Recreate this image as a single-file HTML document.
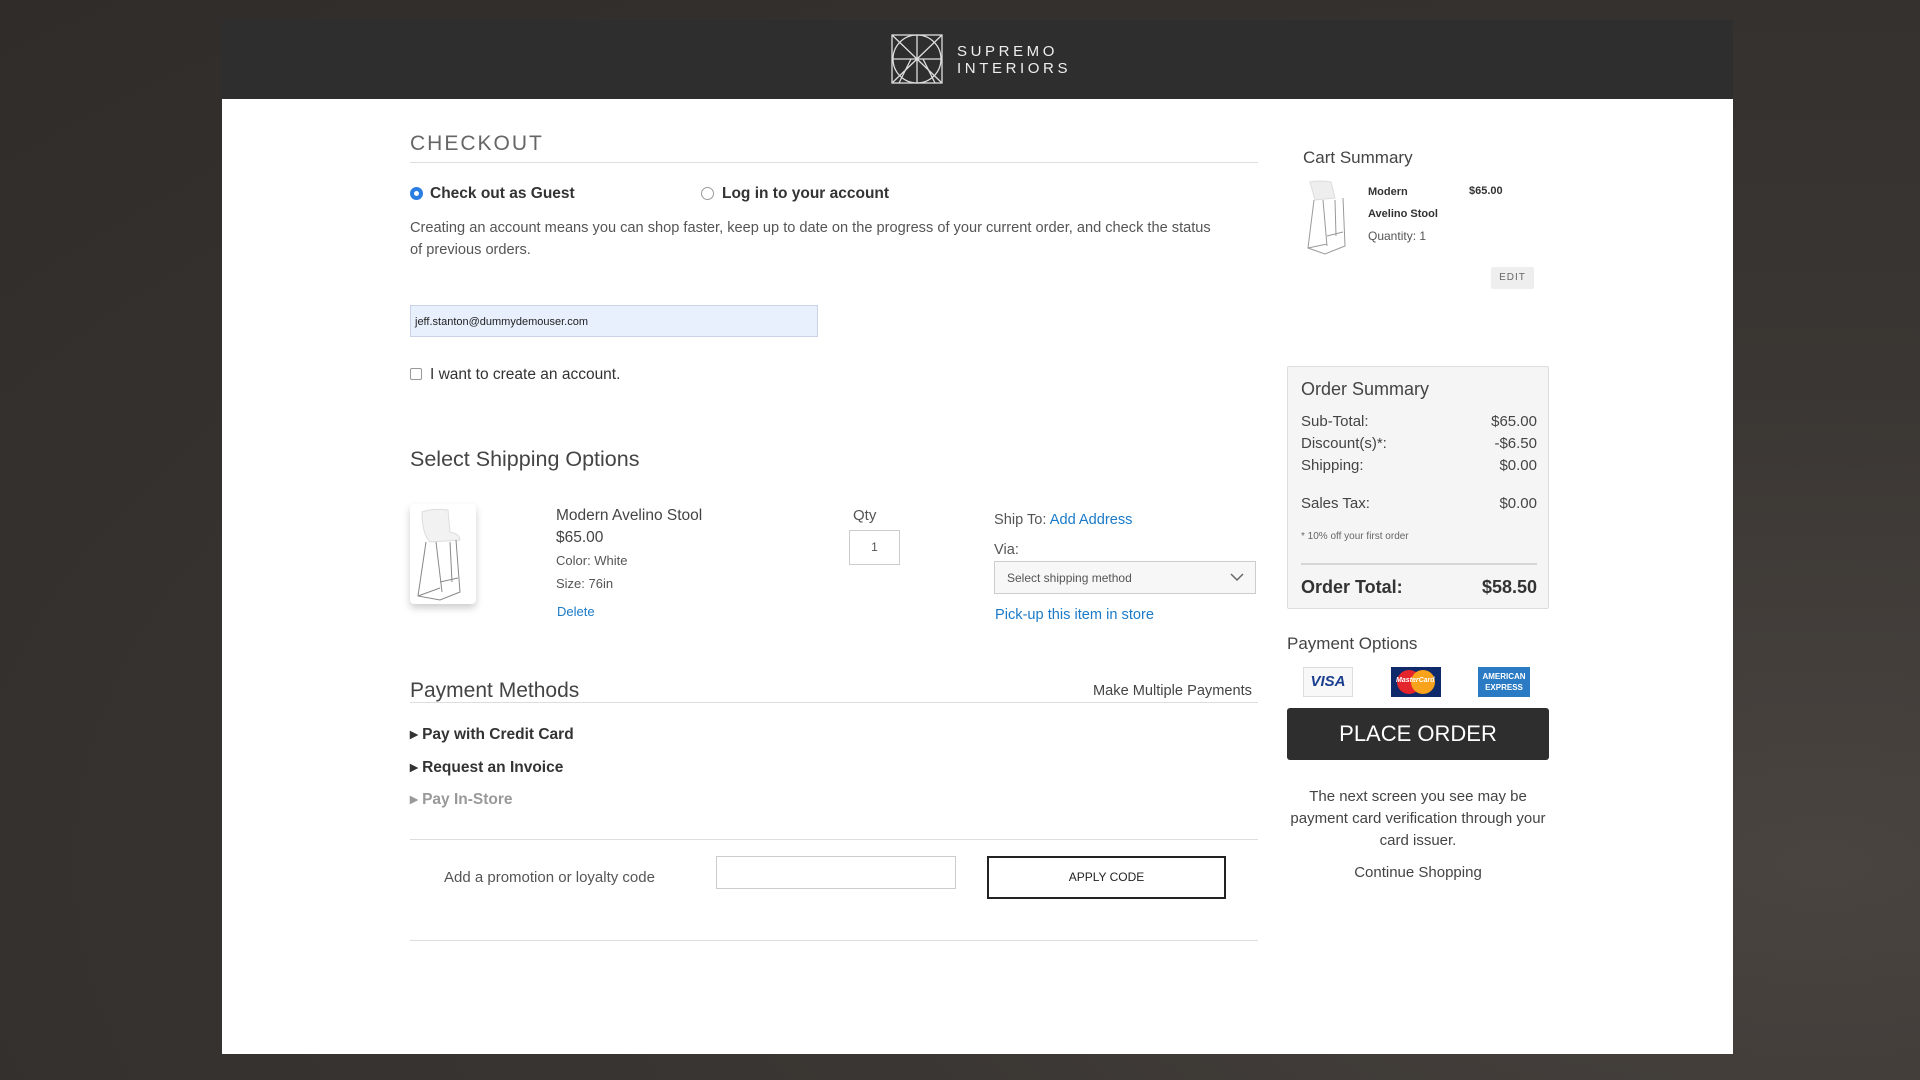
<!DOCTYPE html>
<html><head><meta charset="utf-8"><style>
*{margin:0;padding:0;box-sizing:border-box}
body{width:1920px;height:1080px;overflow:hidden;background:#3b3734;font-family:"Liberation Sans",sans-serif;color:#333;position:relative}
.a{position:absolute;white-space:nowrap}
.bg1{position:absolute;left:0;top:0;width:1920px;height:1080px;background:radial-gradient(ellipse at 95% 80%,#4a4440 0,#3a3633 40%,#2f2c2a 100%)}
.hdr{position:absolute;left:222px;top:20px;width:1511px;height:79px;background:#2e2e2e}
.panel{position:absolute;left:222px;top:99px;width:1511px;height:955px;background:#fff}
.line{position:absolute;height:1px;background:#ddd}
.blue{color:#1a7ac8}
.radio{position:absolute;width:13px;height:13px;border-radius:50%;border:1px solid #999;background:#fff}
</style></head><body>
<div class="bg1"></div>
<div class="hdr"></div>
<svg class="a" style="left:891px;top:34px" width="52" height="50" viewBox="0 0 52 50" fill="none" stroke="#ddd" stroke-width="1.3">
<rect x="1" y="1" width="50" height="48"/><path d="M1 1L51 49M51 1L1 49M26 1V49M1 25H51"/><circle cx="26" cy="25" r="24"/><path d="M8 49L20 25M44 49L32 25"/></svg>
<div class="a" style="left:957px;top:43px;font-size:15px;letter-spacing:3.6px;color:#eee;line-height:17px">SUPREMO<br>INTERIORS</div>
<div class="panel"></div>

<div class="a" style="left:410px;top:132px;font-size:21px;letter-spacing:2px;color:#666">CHECKOUT</div>
<div class="line" style="left:410px;top:162px;width:848px"></div>
<div class="radio" style="left:410px;top:187px;border:4px solid #2a7de1"></div>
<div class="a" style="left:430px;top:185px;font-size:15.5px;font-weight:bold;color:#333">Check out as Guest</div>
<div class="radio" style="left:701px;top:187px"></div>
<div class="a" style="left:722px;top:185px;font-size:15.5px;font-weight:bold;color:#333">Log in to your account</div>
<div class="a" style="left:410px;top:217px;font-size:14.6px;line-height:22px;color:#555">Creating an account means you can shop faster, keep up to date on the progress of your current order, and check the status<br>of previous orders.</div>
<div class="a" style="left:410px;top:305px;width:408px;height:32px;background:#e8f0fe;border:1px solid #c8d4e6;font-size:11px;padding:10px 4px;color:#222">jeff.stanton@dummydemouser.com</div>
<div class="a" style="left:410px;top:368px;width:12px;height:12px;border:1px solid #999;border-radius:2px"></div>
<div class="a" style="left:430px;top:366px;font-size:15.5px;color:#333">I want to create an account.</div>

<div class="a" style="left:410px;top:447px;font-size:21.5px;color:#444">Select Shipping Options</div>
<div class="a" style="left:410px;top:504px;width:66px;height:100px;background:#fff;border-radius:4px;box-shadow:0 4px 8px rgba(0,0,0,.2)">
<svg width="66" height="100" viewBox="0 0 66 100" fill="none" stroke="#888" stroke-width="1"><path d="M12 8Q22 4 38 6L40 28Q50 30 50 36L20 38Q12 30 12 8Z" fill="#f2f2f2" stroke="#ddd"/><path d="M16 38L8 92L30 96L50 88L46 36M26 38L32 88M40 38L42 78M30 78L48 74M8 92L30 84"/></svg></div>
<div class="a" style="left:556px;top:507px;font-size:15.5px;color:#444">Modern Avelino Stool</div>
<div class="a" style="left:556px;top:529px;font-size:15.5px;color:#444">$65.00</div>
<div class="a" style="left:556px;top:553px;font-size:13px;color:#555">Color: White</div>
<div class="a" style="left:556px;top:576px;font-size:13px;color:#555">Size: 76in</div>
<div class="a blue" style="left:557px;top:604px;font-size:13px">Delete</div>
<div class="a" style="left:853px;top:507px;font-size:15px;color:#555">Qty</div>
<div class="a" style="left:849px;top:530px;width:51px;height:35px;border:1px solid #ccc;font-size:12px;text-align:center;line-height:33px;color:#555">1</div>
<div class="a" style="left:994px;top:512px;font-size:14.6px;color:#555">Ship To: <span class="blue">Add Address</span></div>
<div class="a" style="left:994px;top:542px;font-size:14.6px;color:#555">Via:</div>
<div class="a" style="left:994px;top:561px;width:262px;height:33px;border:1px solid #ccc;background:#f7f7f7;font-size:12px;color:#555;padding:9px 12px">Select shipping method</div>
<svg class="a" style="left:1230px;top:572px" width="14" height="10"><path d="M1 2L7 8L13 2" stroke="#666" fill="none" stroke-width="1.5"/></svg>
<div class="a blue" style="left:995px;top:607px;font-size:14.6px">Pick-up this item in store</div>

<div class="a" style="left:410px;top:679px;font-size:21px;color:#444">Payment Methods</div>
<div class="a" style="left:1093px;top:683px;font-size:14.6px;color:#444">Make Multiple Payments</div>
<div class="line" style="left:410px;top:702px;width:848px"></div>
<div class="a" style="left:410px;top:725px;font-size:15.5px;font-weight:bold;color:#333">▸ Pay with Credit Card</div>
<div class="a" style="left:410px;top:758px;font-size:15.5px;font-weight:bold;color:#333">▸ Request an Invoice</div>
<div class="a" style="left:410px;top:790px;font-size:15.5px;font-weight:bold;color:#999">▸ Pay In-Store</div>
<div class="line" style="left:410px;top:839px;width:848px"></div>
<div class="a" style="left:444px;top:869px;font-size:15px;color:#555">Add a promotion or loyalty code</div>
<div class="a" style="left:716px;top:856px;width:240px;height:33px;border:1px solid #ccc"></div>
<div class="a" style="left:987px;top:856px;width:239px;height:43px;border:2px solid #222;font-size:12px;text-align:center;line-height:39px;color:#222">APPLY CODE</div>
<div class="line" style="left:410px;top:940px;width:848px"></div>

<div class="a" style="left:1303px;top:148px;font-size:17px;color:#444">Cart Summary</div>
<svg class="a" style="left:1305px;top:180px" width="46" height="76" viewBox="0 0 46 76" fill="none" stroke="#999" stroke-width="1"><path d="M5 2Q14 0 26 2L30 18L10 20Z" fill="#eee" stroke="#ddd"/><path d="M9 20L3 68L20 74L40 66L38 18M18 20L22 66M30 20L31 56M22 56L38 52M3 68L22 64"/></svg>
<div class="a" style="left:1368px;top:186px;font-size:11px;font-weight:bold;color:#333">Modern</div>
<div class="a" style="left:1368px;top:208px;font-size:11px;font-weight:bold;color:#333">Avelino Stool</div>
<div class="a" style="left:1368px;top:229px;font-size:12px;color:#555">Quantity: 1</div>
<div class="a" style="left:1469px;top:185px;font-size:11px;font-weight:bold;color:#333">$65.00</div>
<div class="a" style="left:1491px;top:267px;width:43px;height:22px;background:#eee;border-radius:2px;font-size:10px;text-align:center;line-height:22px;letter-spacing:1px;color:#666">EDIT</div>

<div class="a" style="left:1287px;top:366px;width:262px;height:243px;background:#f5f5f5;border:1px solid #ddd;border-radius:2px"></div>
<div class="a" style="left:1301px;top:379px;font-size:18px;color:#444">Order Summary</div>
<div class="a" style="left:1301px;top:411px;font-size:15px;line-height:22px;color:#444">Sub-Total:<br>Discount(s)*:<br>Shipping:</div>
<div class="a" style="right:383px;top:411px;font-size:15px;line-height:22px;color:#444;text-align:right">$65.00<br>-$6.50<br>$0.00</div>
<div class="a" style="left:1301px;top:495px;font-size:15px;color:#444">Sales Tax:</div>
<div class="a" style="right:383px;top:495px;font-size:15px;color:#444">$0.00</div>
<div class="a" style="left:1301px;top:531px;font-size:10px;color:#666">* 10% off your first order</div>
<div class="line" style="left:1301px;top:563px;width:236px;background:#d6d6d6;height:2px"></div>
<div class="a" style="left:1301px;top:577px;font-size:18px;font-weight:bold;color:#333">Order Total:</div>
<div class="a" style="right:383px;top:577px;font-size:18px;font-weight:bold;color:#333">$58.50</div>

<div class="a" style="left:1287px;top:634px;font-size:17px;color:#444">Payment Options</div>
<div class="a" style="left:1303px;top:667px;width:50px;height:30px;border:1px solid #ddd;background:#f8f8f8;font-size:15px;font-weight:bold;font-style:italic;color:#1a3f8f;text-align:center;line-height:28px">VISA</div>
<div class="a" style="left:1391px;top:667px;width:50px;height:30px;background:#0f2a6b"><div class="a" style="left:6px;top:3px;width:24px;height:24px;border-radius:50%;background:#e4252b"></div><div class="a" style="left:20px;top:3px;width:24px;height:24px;border-radius:50%;background:#f9a21b"></div><div class="a" style="left:5px;top:10px;font-size:7px;font-style:italic;font-weight:bold;color:#fff">MasterCard</div></div>
<div class="a" style="left:1478px;top:667px;width:52px;height:30px;background:#2a7bc4;font-size:8px;font-weight:bold;color:#fff;text-align:center;line-height:11px;padding-top:4px">AMERICAN<br>EXPRESS</div>
<div class="a" style="left:1287px;top:708px;width:262px;height:52px;background:#2e2e2e;border-radius:3px;color:#fff;font-size:22px;text-align:center;line-height:52px">PLACE ORDER</div>
<div class="a" style="left:1287px;top:786px;width:262px;font-size:15px;line-height:22px;color:#444;text-align:center;white-space:normal">The next screen you see may be payment card verification through your card issuer.</div>
<div class="a" style="left:1287px;top:864px;width:262px;font-size:15px;color:#444;text-align:center">Continue Shopping</div>
</body></html>
